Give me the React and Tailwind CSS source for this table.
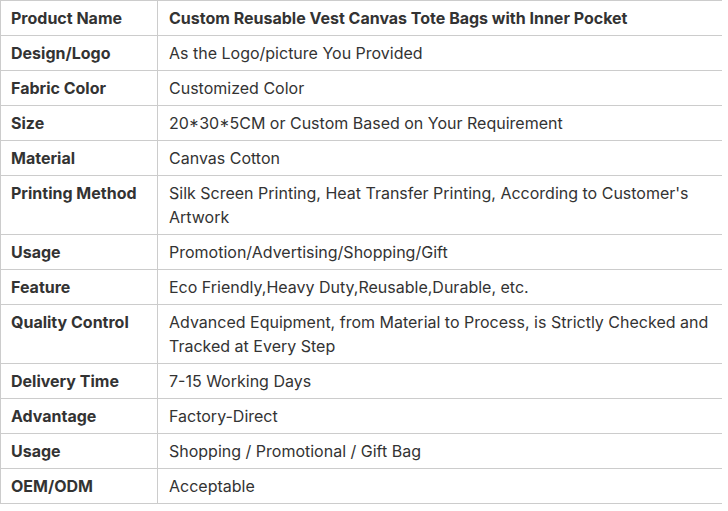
const rows = [
  ['Product Name', 'Custom Reusable Vest Canvas Tote Bags with Inner Pocket', true],
  ['Design/Logo', 'As the Logo/picture You Provided'],
  ['Fabric Color', 'Customized Color'],
  ['Size', '20*30*5CM or Custom Based on Your Requirement'],
  ['Material', 'Canvas Cotton'],
  ['Printing Method', "Silk Screen Printing, Heat Transfer Printing, According to Customer's Artwork"],
  ['Usage', 'Promotion/Advertising/Shopping/Gift'],
  ['Feature', 'Eco Friendly,Heavy Duty,Reusable,Durable, etc.'],
  ['Quality Control', 'Advanced Equipment, from Material to Process, is Strictly Checked and Tracked at Every Step'],
  ['Delivery Time', '7-15 Working Days'],
  ['Advantage', 'Factory-Direct'],
  ['Usage', 'Shopping / Promotional / Gift Bag'],
  ['OEM/ODM', 'Acceptable'],
]

export default function App() {
  return (
    <div className="w-[728px] h-[511px] bg-white font-['Inter',sans-serif] text-[16px] leading-[24px] text-[#333]">
      <table className="w-[722px] border-collapse table-fixed">
        <colgroup>
          <col className="w-[157px]" />
          <col />
        </colgroup>
        <tbody>
          {rows.map(([label, value, head], i) => (
            <tr key={i}>
              <td className="border border-[#ccc] pl-[10px] pr-2 py-[5px] align-top font-bold">
                {label}
              </td>
              <td className={`border border-r-0 border-[#ccc] pl-[11px] pr-2 py-[5px] align-top ${head ? 'font-bold' : ''}`}>
                {value}
              </td>
            </tr>
          ))}
        </tbody>
      </table>
    </div>
  )
}
